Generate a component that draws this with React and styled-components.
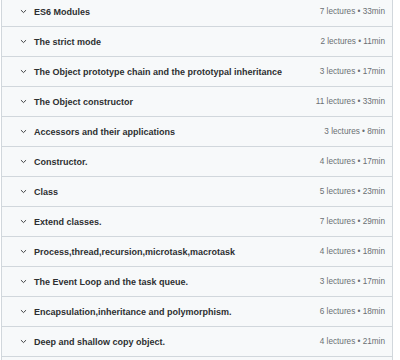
import React from "react";
import styled, { createGlobalStyle } from "styled-components";

const Global = createGlobalStyle`
  html, body { margin: 0; padding: 0; background: #ffffff; }
  body { font-family: "Liberation Sans", Arial, sans-serif; overflow: hidden; }
`;

const Viewport = styled.div`
  width: 400px;
  height: 360px;
  overflow: hidden;
  background: #ffffff;
`;

const Panel = styled.div`
  margin: -4px 0 0 1px;
  width: 392px;
  height: 370px;
  box-sizing: border-box;
  border: 1px solid #d1d7dc;
  border-bottom: none;
  background: #f7f9fa;
  display: flex;
  flex-direction: column;
`;

const Row = styled.div`
  height: 30px;
  flex: none;
  box-sizing: border-box;
  border-bottom: 1px solid #d1d7dc;
  background: #f7f9fa;
  display: flex;
  align-items: center;
  padding: 0 7px 0 17px;
`;

const Chevron = styled.svg`
  width: 9px;
  height: 9px;
  flex: none;
  margin-right: 6px;
`;

const Title = styled.div`
  flex: 1;
  font-size: 9px;
  font-weight: 700;
  color: #2d2f31;
  white-space: nowrap;
`;

const Meta = styled.div`
  font-size: 8.2px;
  color: #6a6f73;
  white-space: nowrap;
`;

const sections = [
  ["ES6 Modules", 7, 33],
  ["The strict mode", 2, 11],
  ["The Object prototype chain and the prototypal inheritance", 3, 17],
  ["The Object constructor", 11, 33],
  ["Accessors and their applications", 3, 8],
  ["Constructor.", 4, 17],
  ["Class", 5, 23],
  ["Extend classes.", 7, 29],
  ["Process,thread,recursion,microtask,macrotask", 4, 18],
  ["The Event Loop and the task queue.", 3, 17],
  ["Encapsulation,inheritance and polymorphism.", 6, 18],
  ["Deep and shallow copy object.", 4, 21],
];

export default function App() {
  return (
    <Viewport>
      <Global />
      <Panel>
        {sections.map(([t, l, m]) => (
          <Row key={t}>
            <Chevron viewBox="0 0 10 10">
              <path d="M2.5 3.8 L5 6.2 L7.5 3.8" fill="none" stroke="#2d2f31" strokeWidth="1" strokeLinecap="round" strokeLinejoin="round" />
            </Chevron>
            <Title>{t}</Title>
            <Meta>{l} lectures • {m}min</Meta>
          </Row>
        ))}
      </Panel>
    </Viewport>
  );
}
